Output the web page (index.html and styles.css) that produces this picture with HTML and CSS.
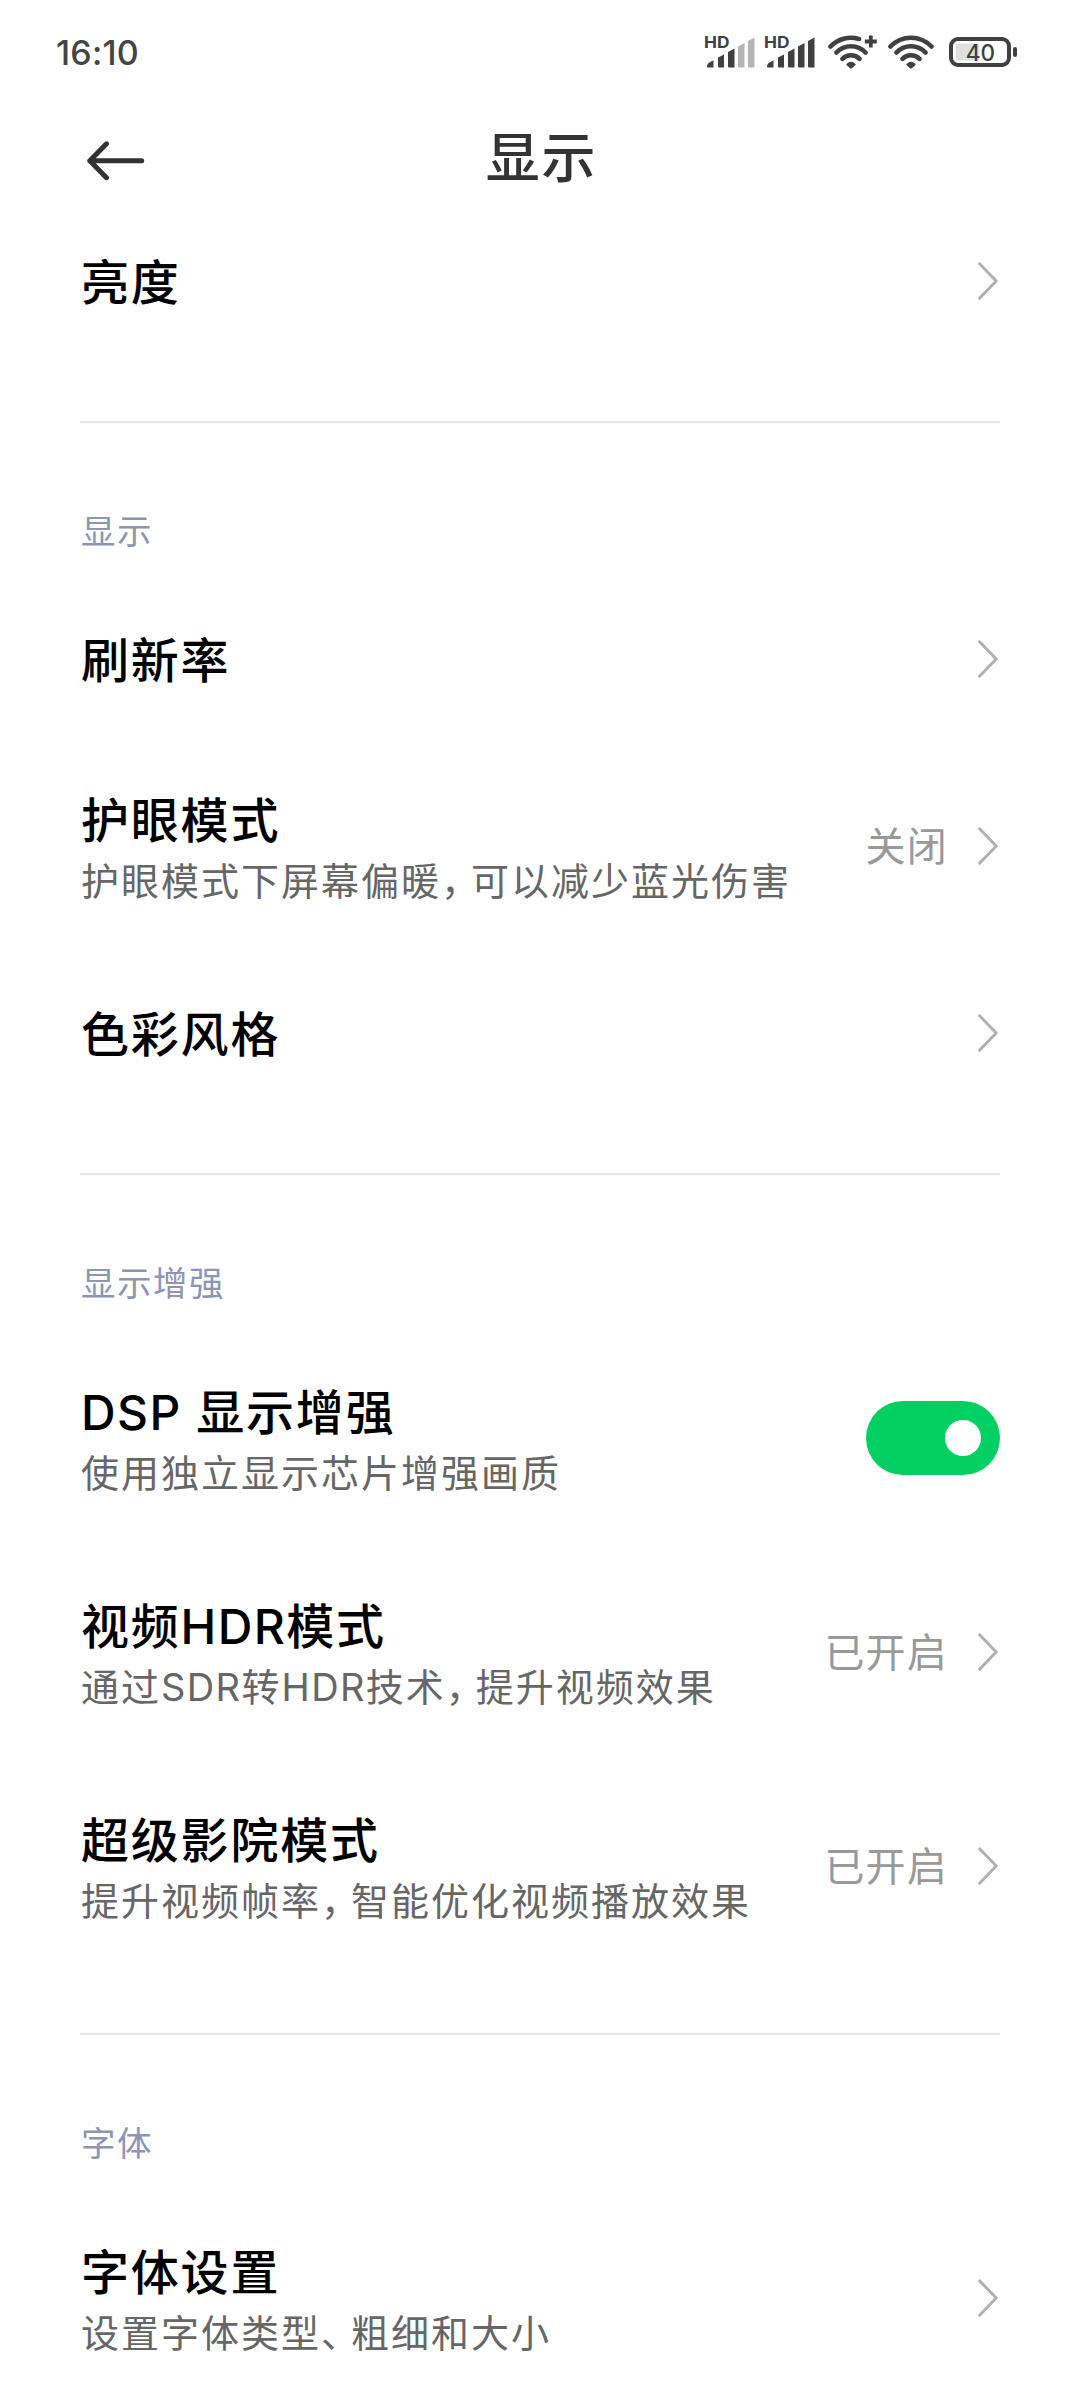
FILE: index.html
```
<!DOCTYPE html>
<html lang="zh-CN">
<head>
<meta charset="utf-8">
<title>显示</title>
<link rel="stylesheet" href="styles.css">
</head>
<body>
<svg class="defs" width="0" height="0" aria-hidden="true">
  <symbol id="chevron" viewBox="0 0 20 38"><path d="M1.6 1.8 18.2 19 1.6 36.2"/></symbol>
</svg>
<div class="status">
  <time class="clock">16:10</time>
  <div class="status-icons">
    <svg class="signal" width="50" height="34" viewBox="0 0 50 34">
      <text x="-1" y="12.800" textLength="25.500" lengthAdjust="spacingAndGlyphs">HD</text>
      <path d="M3.5 28 8.5 25.200V32.500H3Q2 32.500 2 31.500V30.500ZM13 22.500 19 19.500V32.500H14Q13 32.500 13 31.500ZM23 17 29.500 13.500V32.500H24Q23 32.500 23 31.500Z"/>
      <path class="off" d="M33 11.500 39.500 8V32.500H34Q33 32.500 33 31.500ZM43 6 49.500 2.500V32.500H44Q43 32.500 43 31.500Z"/>
    </svg>
    <svg class="signal second" width="50" height="34" viewBox="0 0 50 34">
      <text x="-1" y="12.800" textLength="25.500" lengthAdjust="spacingAndGlyphs">HD</text>
      <path d="M3.5 28 8.500 25.200V32.500H3Q2 32.500 2 31.500V30.500ZM13 22.500 19 19.500V32.500H14Q13 32.500 13 31.500ZM23 17 29.500 13.500V32.500H24Q23 32.500 23 31.500ZM33 11.500 39.500 8V32.500H34Q33 32.500 33 31.500ZM43 6 49.500 2.500V32.500H44Q43 32.500 43 31.500Z"/>
    </svg>
    <svg class="wifi plus" width="50" height="36" viewBox="0 -1 50 36">
      <path d="M2.500 11.500A28.300 28.300 0 0 1 31 4M8.500 17.500A20 20 0 0 1 37.500 17.500M14.500 23.800A12 12 0 0 1 31.500 23.800"/>
      <path d="M42.800.5V12.500M36.800 6.500H48.800" class="cross"/>
      <path class="dot" d="M18.500 29Q23 24.500 27.500 29 28 29.500 27.500 30L24 33.200Q23 34 22 33.200L18.500 30Q18 29.500 18.500 29Z"/>
    </svg>
    <svg class="wifi" width="46" height="36" viewBox="0 -1 46 36">
      <path d="M2.500 11.500A28.300 28.300 0 0 1 43.500 11.500M8.500 17.500A20 20 0 0 1 37.500 17.500M14.500 23.800A12 12 0 0 1 31.500 23.800"/>
      <path class="dot" d="M18.500 29Q23 24.500 27.500 29 28 29.500 27.500 30L24 33.200Q23 34 22 33.200L18.500 30Q18 29.500 18.500 29Z"/>
    </svg>
    <svg class="battery" width="68" height="30" viewBox="0 0 68 30">
      <rect class="level" x="6.500" y="6.500" width="24" height="17" rx="3"/>
      <rect class="case" x="2" y="2" width="58" height="26" rx="7"/>
      <rect x="64" y="10" width="4" height="10" rx="2"/>
      <text x="31.500" y="23.500">40</text>
    </svg>
  </div>
</div>
<header class="header">
  <svg class="back" width="58" height="40" viewBox="0 0 58 40"><path d="M19.500 2.800 2.800 19.700 19.500 36.700M2.800 19.700H54.700"/></svg>
  <h1 class="page-title">显示</h1>
</header>
<main class="settings">
  <section class="group top">
    <div class="row"><div class="label"><div class="name">亮度</div></div><svg class="chevron"><use href="#chevron"/></svg></div>
  </section>
  <section class="group">
    <h2 class="category">显示</h2>
    <div class="row"><div class="label"><div class="name">刷新率</div></div><svg class="chevron"><use href="#chevron"/></svg></div>
    <div class="row tall"><div class="label"><div class="name">护眼模式</div><div class="desc">护眼模式下屏幕偏暖<span class="punct">，</span>可以减少蓝光伤害</div></div><span class="value">关闭</span><svg class="chevron"><use href="#chevron"/></svg></div>
    <div class="row"><div class="label"><div class="name">色彩风格</div></div><svg class="chevron"><use href="#chevron"/></svg></div>
  </section>
  <section class="group">
    <h2 class="category">显示增强</h2>
    <div class="row tall"><div class="label"><div class="name"><span class="latin">DSP</span> 显示增强</div><div class="desc">使用独立显示芯片增强画质</div></div><span class="switch"><span class="knob"></span></span></div>
    <div class="row tall"><div class="label"><div class="name">视频<span class="latin">HDR</span>模式</div><div class="desc">通过<span class="latin">SDR</span>转<span class="latin">HDR</span>技术<span class="punct">，</span>提升视频效果</div></div><span class="value">已开启</span><svg class="chevron"><use href="#chevron"/></svg></div>
    <div class="row tall"><div class="label"><div class="name">超级影院模式</div><div class="desc">提升视频帧率<span class="punct">，</span>智能优化视频播放效果</div></div><span class="value">已开启</span><svg class="chevron"><use href="#chevron"/></svg></div>
  </section>
  <section class="group">
    <h2 class="category">字体</h2>
    <div class="row tall"><div class="label"><div class="name">字体设置</div><div class="desc">设置字体类型<span class="punct">、</span>粗细和大小</div></div><svg class="chevron"><use href="#chevron"/></svg></div>
  </section>
</main>
</body>
</html>
```
FILE: styles.css
```
* { box-sizing: border-box; }
body {
  margin: 0;
  width: 1080px;
  height: 2400px;
  overflow: hidden;
  background: #fefefe;
  color: #000;
  font-family: Inter, "Noto Sans CJK SC", sans-serif;
}
svg { display: block; flex: none; }
.defs { display: none; }

.status {
  display: flex;
  justify-content: space-between;
  align-items: center;
  height: 104px;
  padding: 0 63px 0 56px;
}
.clock {
  padding-top: 2px;
  font-size: 34px;
  font-weight: 500;
  line-height: 40px;
  letter-spacing: 0.2px;
  color: #444;
}
.status-icons { display: flex; align-items: center; fill: #404040; }
.signal { margin-right: 10px; overflow: visible; }
.signal.second { margin-right: 13px; }
.signal text { font-size: 16px; font-weight: 700; }
.signal .off { fill: #b5b5b5; }
.wifi { margin-right: 15px; fill: none; stroke: #404040; stroke-width: 4.6; stroke-linecap: round; }
.wifi.plus { margin-right: 10px; }
.wifi .cross { stroke-width: 3.8; stroke-linecap: butt; }
.wifi .dot { fill: #404040; stroke: none; }
.battery .level { fill: #e0e0e0; }
.battery .case { fill: none; stroke: #404040; stroke-width: 4; }
.battery text { font-size: 22.500px; font-weight: 500; text-anchor: middle; }

.header {
  display: grid;
  grid-template-columns: 58px 1fr 58px;
  align-items: center;
  height: 112px;
  padding: 1px 86px 0 87px;
}
.back { fill: none; stroke: #333; stroke-width: 5; stroke-linecap: round; stroke-linejoin: round; }
.page-title {
  margin: 0;
  padding: 0 0 3px 2px;
  text-align: center;
  font-size: 54px;
  font-weight: 500;
  line-height: 70px;
  letter-spacing: 1.8px;
  color: #333;
}

.settings { padding: 0 80px; }
.group { padding-bottom: 60px; }
.group + .group { border-top: 2px solid #e5e5e5; }
.group.top { padding-bottom: 75px; }
.category {
  margin: 0;
  padding: 61px 0 0 1px;
  height: 156px;
  font-size: 34.500px;
  font-weight: 400;
  line-height: 96px;
  letter-spacing: 1.500px;
  color: #8d95b3;
}
.row { display: flex; align-items: center; height: 160px; }
.row.tall { height: 214px; }
.top .row { height: 130px; }
.label { flex: 1; padding: 3px 0 0 1px; white-space: nowrap; }
.tall .label { padding-top: 0; }
.name { font-size: 48px; font-weight: 500; line-height: 70px; letter-spacing: 1.800px; }
.desc { font-size: 38px; line-height: 50px; letter-spacing: 2px; color: #666; }
.name .latin { letter-spacing: 1.400px; }
.desc .latin { letter-spacing: 1.400px; }
.punct { letter-spacing: -8px; }
.value { padding-top: 2px; font-size: 40px; line-height: 50px; letter-spacing: 1.200px; color: #999; }
.chevron {
  width: 20px;
  height: 38px;
  margin: 0 2px 0 30px;
  fill: none;
  stroke: #b0b0b0;
  stroke-width: 3;
  stroke-linecap: round;
  stroke-linejoin: round;
}
.switch {
  display: flex;
  align-items: center;
  justify-content: flex-end;
  width: 134px;
  height: 74px;
  padding-right: 19px;
  border-radius: 37px;
  background: #03d063;
}
.knob { width: 36px; height: 36px; border-radius: 50%; background: #fff; }
```
